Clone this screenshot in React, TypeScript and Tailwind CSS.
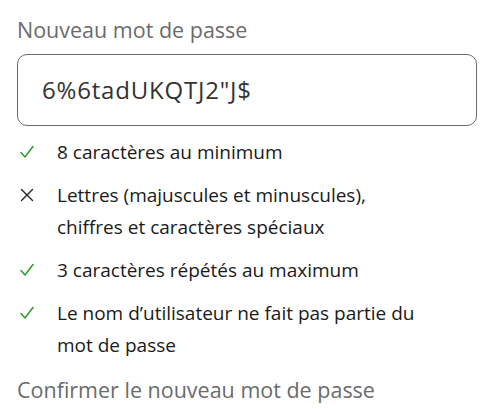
type Rule = { ok: boolean; text: string }

const rules: Rule[] = [
  { ok: true, text: '8 caractères au minimum' },
  { ok: false, text: 'Lettres (majuscules et minuscules), chiffres et caractères spéciaux' },
  { ok: true, text: '3 caractères répétés au maximum' },
  { ok: true, text: 'Le nom d’utilisateur ne fait pas partie du mot de passe' },
]

function CheckIcon() {
  return (
    <svg width="14" height="14" viewBox="0 0 14 14" fill="none">
      <path d="M1 7.5 L5 12 L13 1.5" stroke="#2c9a2c" strokeWidth="1.5" strokeLinecap="round" strokeLinejoin="round" />
    </svg>
  )
}

function CrossIcon() {
  return (
    <svg width="14" height="14" viewBox="0 0 14 14" fill="none">
      <path d="M1.5 1.5 L12.5 12.5 M12.5 1.5 L1.5 12.5" stroke="#222" strokeWidth="1.4" strokeLinecap="round" />
    </svg>
  )
}

export default function App() {
  return (
    <div className="min-h-screen bg-white px-[17px] pt-[16px] font-['Open_Sans',sans-serif]">
      <label className="block text-[21.5px] leading-[28px] text-[#6b6b6b]">Nouveau mot de passe</label>
      <div className="mt-[10px] flex h-[72px] w-[460px] items-center rounded-[10px] border border-[#6b6b6b] px-[24px] text-[24px] tracking-[0.8px] text-[#333]">
        6%6tadUKQTJ2"J$
      </div>

      <ul className="mt-[10px] flex flex-col gap-[11px]">
        {rules.map((r) => (
          <li key={r.text} className="flex text-[19px] leading-[32px] text-[#1a1a1a]">
            <span className="flex h-[32px] w-[40px] shrink-0 items-center pl-[3px]">
              {r.ok ? <CheckIcon /> : <CrossIcon />}
            </span>
            <span className="w-[370px]">{r.text}</span>
          </li>
        ))}
      </ul>

      <label className="mt-[15px] block text-[21.5px] leading-[28px] text-[#6b6b6b]">
        Confirmer le nouveau mot de passe
      </label>
    </div>
  )
}
